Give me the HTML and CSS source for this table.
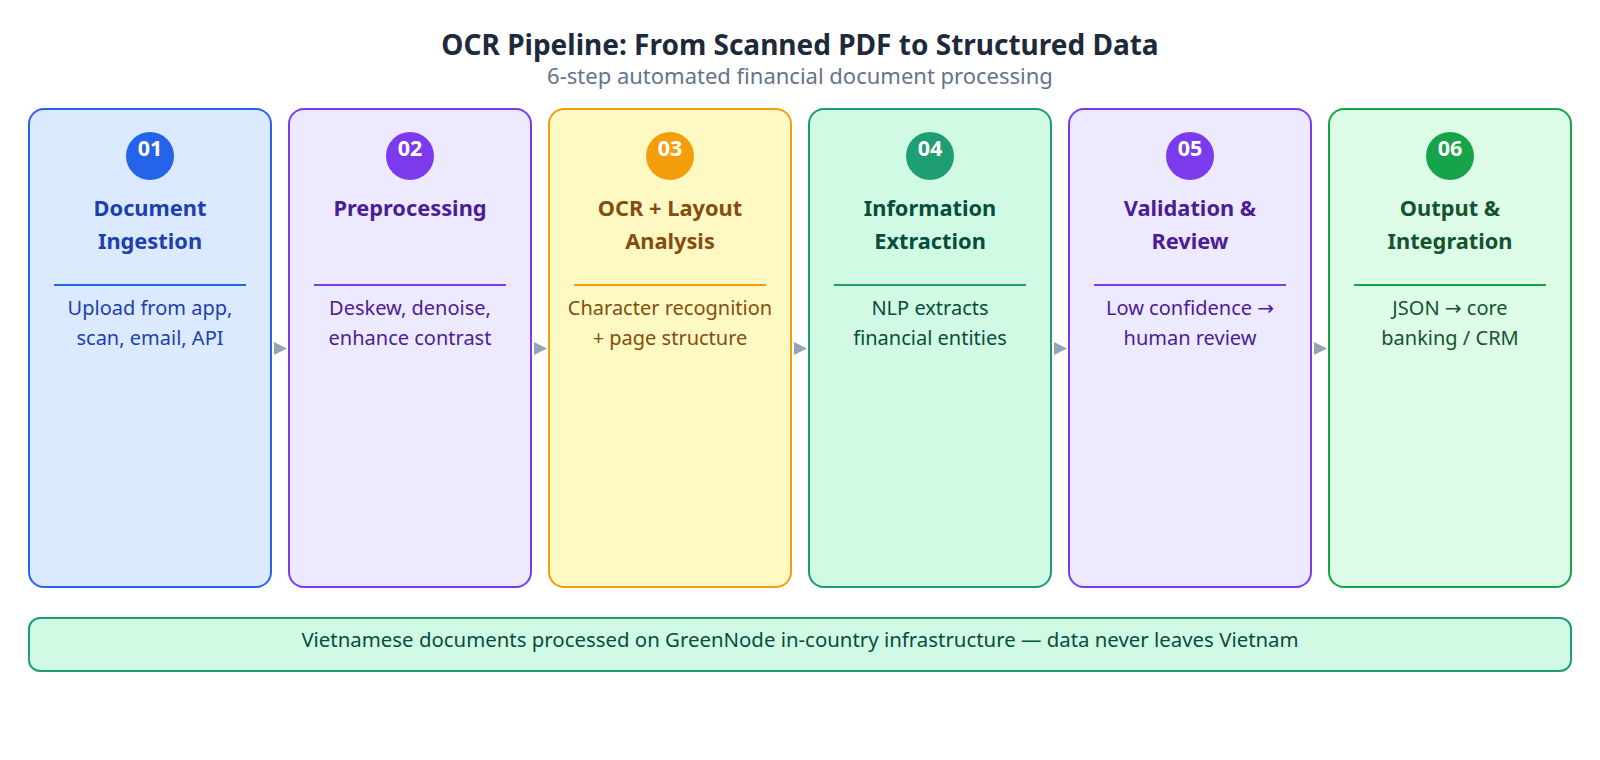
FILE: index.html
```html
<!DOCTYPE html>
<html lang="en">
<head>
<meta charset="utf-8">
<title>OCR Pipeline</title>
<link rel="stylesheet" href="styles.css">
</head>
<body>
<header class="head">
  <h1 class="title">OCR Pipeline: From Scanned PDF to Structured Data</h1>
  <p class="subtitle">6-step automated financial document processing</p>
</header>
<main class="pipeline">
  <section class="card c-blue">
    <div class="badge">01</div>
    <h2 class="card-title">Document<br>Ingestion</h2>
    <div class="rule"></div>
    <p class="desc">Upload from app,<br>scan, email, API</p>
  </section>
  <div class="arrow"><svg width="16" height="13" viewBox="0 0 16 13"><polygon points="2,0 15,6.5 2,13" fill="#94a3b8"/></svg></div>
  <section class="card c-violet">
    <div class="badge">02</div>
    <h2 class="card-title">Preprocessing</h2>
    <div class="rule"></div>
    <p class="desc">Deskew, denoise,<br>enhance contrast</p>
  </section>
  <div class="arrow"><svg width="16" height="13" viewBox="0 0 16 13"><polygon points="2,0 15,6.5 2,13" fill="#94a3b8"/></svg></div>
  <section class="card c-amber">
    <div class="badge">03</div>
    <h2 class="card-title">OCR + Layout<br>Analysis</h2>
    <div class="rule"></div>
    <p class="desc">Character recognition<br>+ page structure</p>
  </section>
  <div class="arrow"><svg width="16" height="13" viewBox="0 0 16 13"><polygon points="2,0 15,6.5 2,13" fill="#94a3b8"/></svg></div>
  <section class="card c-emerald">
    <div class="badge">04</div>
    <h2 class="card-title">Information<br>Extraction</h2>
    <div class="rule"></div>
    <p class="desc">NLP extracts<br>financial entities</p>
  </section>
  <div class="arrow"><svg width="16" height="13" viewBox="0 0 16 13"><polygon points="2,0 15,6.5 2,13" fill="#94a3b8"/></svg></div>
  <section class="card c-violet">
    <div class="badge">05</div>
    <h2 class="card-title">Validation &amp;<br>Review</h2>
    <div class="rule"></div>
    <p class="desc">Low confidence →<br>human review</p>
  </section>
  <div class="arrow"><svg width="16" height="13" viewBox="0 0 16 13"><polygon points="2,0 15,6.5 2,13" fill="#94a3b8"/></svg></div>
  <section class="card c-green">
    <div class="badge">06</div>
    <h2 class="card-title">Output &amp;<br>Integration</h2>
    <div class="rule"></div>
    <p class="desc">JSON → core<br>banking / CRM</p>
  </section>
</main>
<footer class="note">Vietnamese documents processed on GreenNode in-country infrastructure — data never leaves Vietnam</footer>
</body>
</html>
```

FILE: styles.css
```css
* { box-sizing: border-box; }
html, body { margin: 0; padding: 0; background: #ffffff; }
body {
  width: 1600px;
  height: 760px;
  font-family: "Noto Sans", "DejaVu Sans", sans-serif;
  overflow: hidden;
}
.head { padding-top: 29px; text-align: center; }
.title {
  margin: 0;
  font-size: 28px;
  line-height: 30px;
  font-weight: 700;
  color: #1e293b;
}
.subtitle {
  margin: 3px 0 0;
  font-size: 22px;
  line-height: 27px;
  color: #64748b;
}
.pipeline {
  display: flex;
  align-items: center;
  padding: 0 28px;
  margin-top: 19px;
}
.card {
  width: 244px;
  height: 480px;
  flex: none;
  border: 2px solid;
  border-radius: 16px;
  padding-top: 22px;
  text-align: center;
}
.arrow { width: 16px; flex: none; height: 13px; display: flex; margin-top: 0; }
.arrow svg { display: block; }
.badge {
  width: 48px;
  height: 48px;
  margin: 0 auto;
  border-radius: 50%;
  color: #ffffff;
  font-size: 21.5px;
  font-weight: 700;
  line-height: 32px;
}
.card-title {
  margin: 12px 0 0;
  height: 64px;
  font-size: 21.8px;
  line-height: 32.5px;
  font-weight: 700;
}
.rule { height: 2px; margin: 28px 24px 0; }
.desc {
  margin: 7px 0 0;
  font-size: 20px;
  line-height: 29.5px;
}
.c-blue { background: #dbeafe; border-color: #2563eb; color: #1e40af; }
.c-blue .badge, .c-blue .rule { background: #2563eb; }
.c-violet { background: #ede9fe; border-color: #7c3aed; color: #4c1d95; }
.c-violet .badge, .c-violet .rule { background: #7c3aed; }
.c-amber { background: #fef9c3; border-color: #f59e0b; color: #854d0e; }
.c-amber .badge, .c-amber .rule { background: #f59e0b; }
.c-emerald { background: #d1fae5; border-color: #1b9a6c; color: #064e3b; }
.c-emerald .badge, .c-emerald .rule { background: #1e9e72; }
.c-green { background: #dcfce7; border-color: #16a34a; color: #14532d; }
.c-green .badge, .c-green .rule { background: #16a34a; }
.note {
  margin: 29px 28px 0;
  height: 55px;
  border: 2px solid #1e9e72;
  border-radius: 12px;
  background: #d1fae5;
  color: #064e3b;
  font-size: 20.4px;
  line-height: 41px;
  text-align: center;
}
```
